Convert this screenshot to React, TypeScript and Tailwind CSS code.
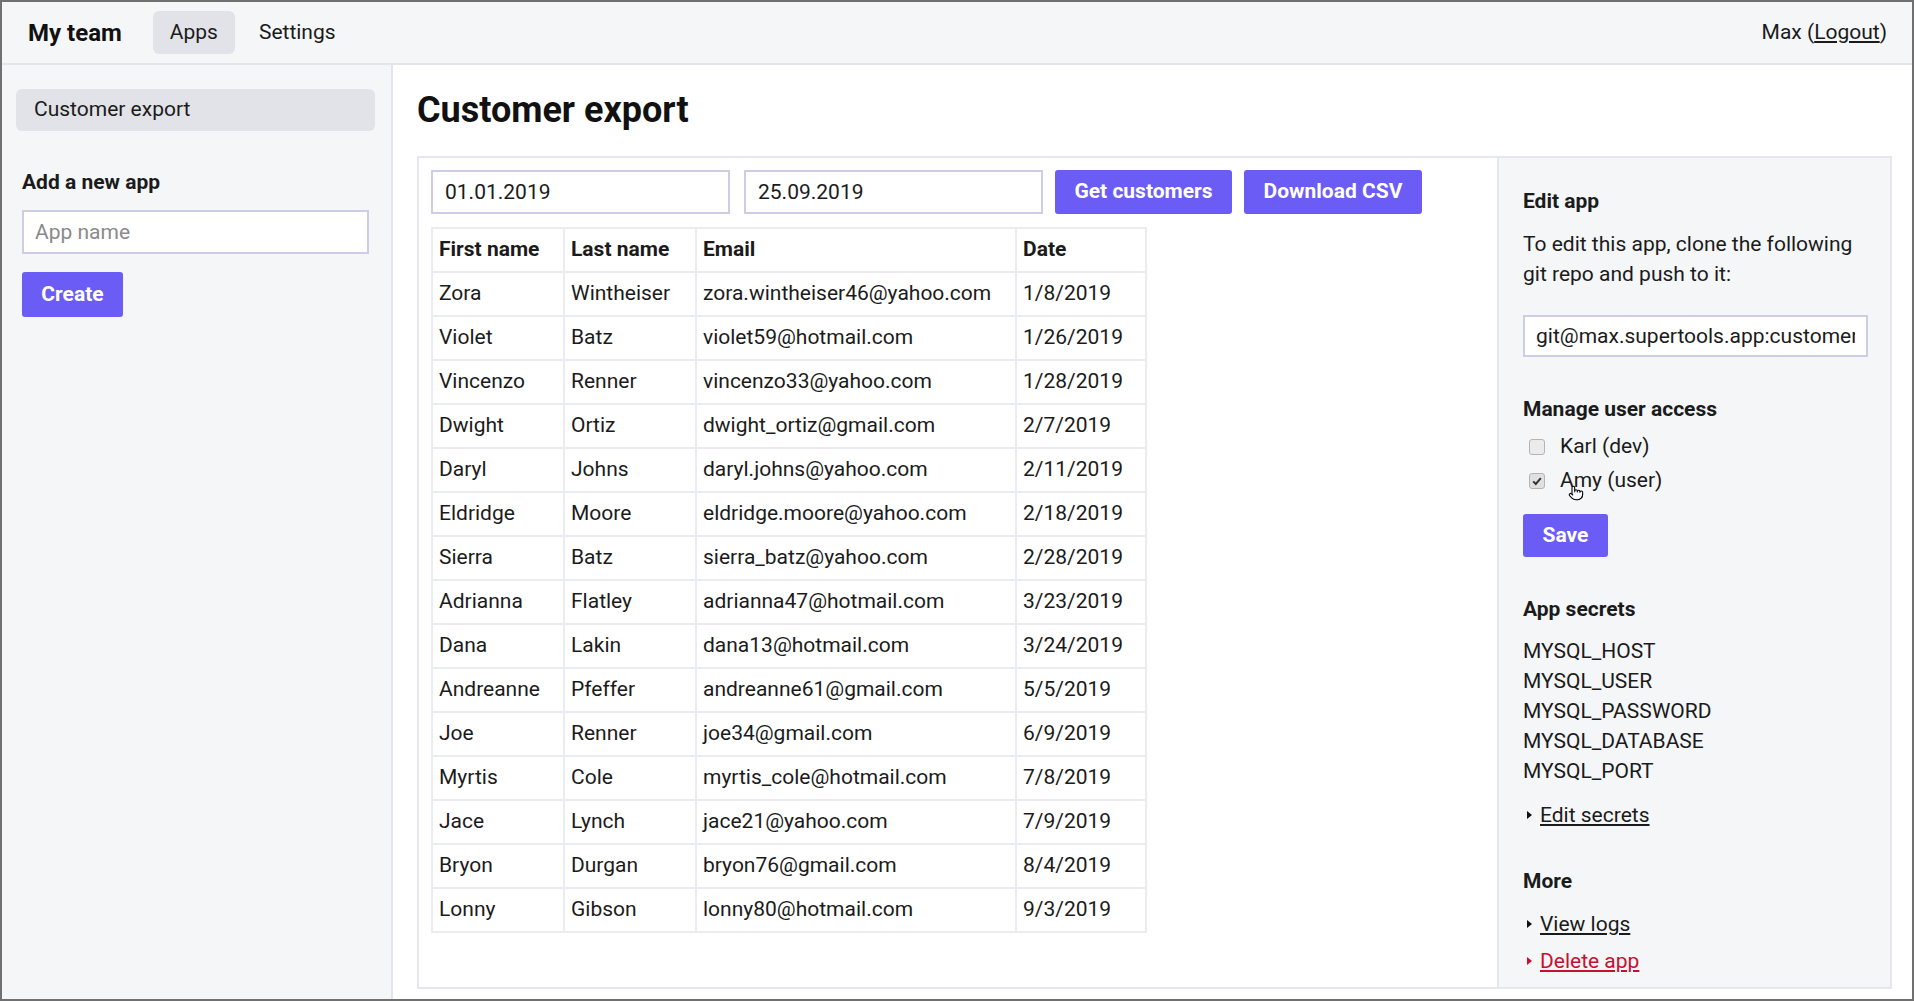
import { Pointer } from 'lucide-react';

const customers = [
  ['Zora', 'Wintheiser', 'zora.wintheiser46@yahoo.com', '1/8/2019'],
  ['Violet', 'Batz', 'violet59@hotmail.com', '1/26/2019'],
  ['Vincenzo', 'Renner', 'vincenzo33@yahoo.com', '1/28/2019'],
  ['Dwight', 'Ortiz', 'dwight_ortiz@gmail.com', '2/7/2019'],
  ['Daryl', 'Johns', 'daryl.johns@yahoo.com', '2/11/2019'],
  ['Eldridge', 'Moore', 'eldridge.moore@yahoo.com', '2/18/2019'],
  ['Sierra', 'Batz', 'sierra_batz@yahoo.com', '2/28/2019'],
  ['Adrianna', 'Flatley', 'adrianna47@hotmail.com', '3/23/2019'],
  ['Dana', 'Lakin', 'dana13@hotmail.com', '3/24/2019'],
  ['Andreanne', 'Pfeffer', 'andreanne61@gmail.com', '5/5/2019'],
  ['Joe', 'Renner', 'joe34@gmail.com', '6/9/2019'],
  ['Myrtis', 'Cole', 'myrtis_cole@hotmail.com', '7/8/2019'],
  ['Jace', 'Lynch', 'jace21@yahoo.com', '7/9/2019'],
  ['Bryon', 'Durgan', 'bryon76@gmail.com', '8/4/2019'],
  ['Lonny', 'Gibson', 'lonny80@hotmail.com', '9/3/2019'],
];

const secrets = ['MYSQL_HOST', 'MYSQL_USER', 'MYSQL_PASSWORD', 'MYSQL_DATABASE', 'MYSQL_PORT'];

// small disclosure triangle, like a <summary> marker
function Caret({ red }: { red?: boolean }) {
  return (
    <svg width="7" height="10" viewBox="0 0 7 10" className="ml-[3px] mr-[7px] shrink-0">
      <path d="M1 1 L6 5 L1 9 Z" fill={red ? '#c8102e' : '#111'} />
    </svg>
  );
}

function Checkbox({ checked }: { checked?: boolean }) {
  return (
    <span
      className={`flex h-[16px] w-[16px] items-center justify-center rounded-[3px] border border-[#b4b4b4] ${
        checked ? 'bg-[#e0e0e0]' : 'bg-[#ebebeb]'
      }`}
    >
      {checked && (
        <svg width="12" height="12" viewBox="0 0 11 11">
          <path d="M2 5.8 L4.4 8.2 L9 2.8" stroke="#333" strokeWidth="1.8" fill="none" />
        </svg>
      )}
    </span>
  );
}

export default function App() {
  return (
    <div className="flex h-[1001px] w-full flex-col overflow-hidden border-2 border-[#707070] font-['Roboto',sans-serif] text-[21px] text-[#1b1b1b]">
      {/* top bar */}
      <header className="flex h-[63px] shrink-0 items-center border-b-2 border-[#e3e4ec] bg-[#f4f6f8] pl-[26px] pr-[25px]">
        <span className="text-[24px] font-bold text-[#111]">My team</span>
        <nav className="ml-[31px] flex items-center gap-[7px] text-[21px]">
          <span className="rounded-md bg-[#e2e3e8] px-[17px] py-[6px]">Apps</span>
          <span className="px-[17px] py-[6px]">Settings</span>
        </nav>
        <span className="ml-auto text-[21px]">
          Max (<span className="underline underline-offset-2">Logout</span>)
        </span>
      </header>

      <div className="flex min-h-0 flex-1">
        {/* sidebar */}
        <aside className="w-[391px] shrink-0 border-r-2 border-[#e3e4ec] bg-[#f4f6f8] pl-[14px] pr-[16px] pt-[24px]">
          <div className="flex h-[42px] items-center rounded-md bg-[#e2e3e8] px-[18px]">Customer export</div>
          <div className="px-[6px] pt-[37px]">
            <h3 className="font-bold leading-[28px]">Add a new app</h3>
            <input
              placeholder="App name"
              className="mt-[14px] h-[44px] w-[347px] border-2 border-[#cfcde6] bg-white px-[11px] text-[21px] placeholder:text-[#8a8a8a] outline-none"
            />
            <button className="mt-[18px] h-[45px] w-[101px] rounded-[3px] bg-[#6c5cf6] text-[21px] font-bold text-white">
              Create
            </button>
          </div>
        </aside>

        {/* main */}
        <main className="min-w-0 flex-1 pl-[24px] pr-[20px] pt-[24px]">
          <h1 className="text-[36px] font-bold leading-[42px] text-[#111]">Customer export</h1>

          <div className="mt-[25px] flex border-2 border-[#e6e6ee]">
            <div className="min-w-0 flex-1 px-[12px] pt-[12px]">
              <div className="flex items-center">
                <input
                  defaultValue="01.01.2019"
                  className="h-[44px] w-[299px] border-2 border-[#cfcde6] bg-white px-[12px] text-[21px] outline-none"
                />
                <input
                  defaultValue="25.09.2019"
                  className="ml-[14px] h-[44px] w-[299px] border-2 border-[#cfcde6] bg-white px-[12px] text-[21px] outline-none"
                />
                <button className="ml-[12px] h-[44px] w-[177px] rounded-[3px] bg-[#6c5cf6] text-[21px] font-bold text-white">
                  Get customers
                </button>
                <button className="ml-[12px] h-[44px] w-[178px] rounded-[3px] bg-[#6c5cf6] text-[21px] font-bold text-white">
                  Download CSV
                </button>
              </div>

              <table className="mt-[13px] table-fixed border-collapse">
                <thead>
                  <tr>
                    <th className="h-[44px] w-[132px] border-2 border-[#ebebf2] pl-[6px] text-left font-bold">First name</th>
                    <th className="h-[44px] w-[132px] border-2 border-[#ebebf2] pl-[6px] text-left font-bold">Last name</th>
                    <th className="h-[44px] w-[320px] border-2 border-[#ebebf2] pl-[6px] text-left font-bold">Email</th>
                    <th className="h-[44px] w-[130px] border-2 border-[#ebebf2] pl-[6px] text-left font-bold">Date</th>
                  </tr>
                </thead>
                <tbody>
                  {customers.map((row) => (
                    <tr key={row[2]}>
                      {row.map((cell, i) => (
                        <td key={i} className="h-[44px] border-2 border-[#ebebf2] pl-[6px] whitespace-nowrap">
                          {cell}
                        </td>
                      ))}
                    </tr>
                  ))}
                </tbody>
              </table>
            </div>

            {/* right panel */}
            <div className="w-[393px] shrink-0 border-l-2 border-[#e6e6ee] bg-[#f4f6f8] pb-[11px] pl-[24px] pr-[20px] pt-[29px]">
              <h3 className="font-bold leading-[28px]">Edit app</h3>
              <p className="mt-[14px] leading-[30px]">To edit this app, clone the following git repo and push to it:</p>
              <input
                readOnly
                value="git@max.supertools.app:customer-export.git"
                className="mt-[26px] h-[42px] w-[345px] border-2 border-[#cfcde6] bg-white px-[11px] text-[21px] outline-none"
              />

              <h3 className="mt-[38px] font-bold leading-[28px]">Manage user access</h3>
              <div className="mt-[7px]">
                <label className="flex h-[34px] items-center pl-[6px]">
                  <Checkbox />
                  <span className="ml-[15px]">Karl (dev)</span>
                </label>
                <label className="flex h-[34px] items-center pl-[6px]">
                  <Checkbox checked />
                  <span className="relative ml-[15px]">
                    Amy (user)
                    <Pointer
                      size={16}
                      strokeWidth={1.6}
                      className="absolute left-[8px] top-[20px] fill-white text-black"
                    />
                  </span>
                </label>
              </div>
              <button className="mt-[16px] h-[43px] w-[85px] rounded-[3px] bg-[#6c5cf6] text-[21px] font-bold text-white">
                Save
              </button>

              <h3 className="mt-[38px] font-bold leading-[28px]">App secrets</h3>
              <ul className="mt-[13px]">
                {secrets.map((s) => (
                  <li key={s} className="leading-[30px]">
                    {s}
                  </li>
                ))}
              </ul>
              <div className="mt-[14px] flex items-center leading-[30px]">
                <Caret />
                <span className="underline underline-offset-2">Edit secrets</span>
              </div>

              <h3 className="mt-[37px] font-bold leading-[28px]">More</h3>
              <div className="mt-[14px] flex items-center leading-[30px]">
                <Caret />
                <span className="underline underline-offset-2">View logs</span>
              </div>
              <div className="mt-[7px] flex items-center leading-[30px] text-[#c8102e]">
                <Caret red />
                <span className="underline underline-offset-2">Delete app</span>
              </div>
            </div>
          </div>
        </main>
      </div>
    </div>
  );
}
